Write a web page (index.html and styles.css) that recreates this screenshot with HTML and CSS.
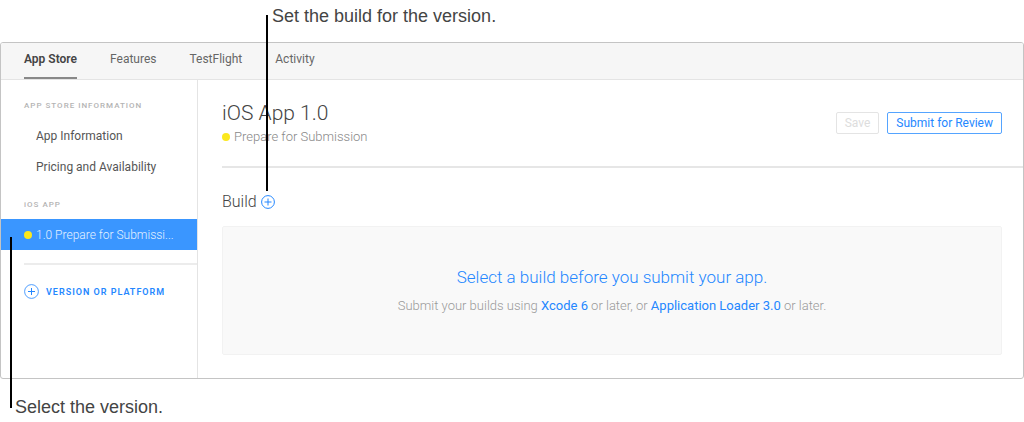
FILE: index.html
```html
<!DOCTYPE html>
<html lang="en">
<head>
    <meta charset="UTF-8">
    <meta name="viewport" content="width=device-width, initial-scale=1.0">
    <title>iOS App 1.0</title>
    <link rel="stylesheet" href="styles.css">
</head>
<body>
    <div class="figure">
        <p class="caption caption-top">Set the build for the version.</p>

        <div class="window">
            <nav class="tabs">
                <a href="#" class="tab active">App Store</a>
                <a href="#" class="tab">Features</a>
                <a href="#" class="tab">TestFlight</a>
                <a href="#" class="tab">Activity</a>
            </nav>

            <div class="columns">
                <aside class="sidebar">
                    <h3 class="group">APP STORE INFORMATION</h3>
                    <a href="#" class="item">App Information</a>
                    <a href="#" class="item">Pricing and Availability</a>
                    <h3 class="group">iOS APP</h3>
                    <a href="#" class="item selected"><span class="dot"></span>1.0 Prepare for Submissi...</a>
                    <div class="add-row">
                        <button class="add-version">
                            <svg width="15" height="15" viewBox="0 0 15 15" fill="none" stroke="currentColor">
                                <circle cx="7.5" cy="7.5" r="6.9" stroke-opacity="0.8"/>
                                <path d="M7.5 4v7M4 7.5h7"/>
                            </svg>
                            VERSION OR PLATFORM
                        </button>
                    </div>
                </aside>

                <main class="content">
                    <header class="app-header">
                        <div>
                            <h1>iOS App 1.0</h1>
                            <p class="status"><span class="dot"></span>Prepare for Submission</p>
                        </div>
                        <div class="actions">
                            <button class="button" disabled>Save</button>
                            <button class="button">Submit for Review</button>
                        </div>
                    </header>

                    <section class="build">
                        <div class="build-title">
                            <h2>Build</h2>
                            <button class="add-build" aria-label="Add build">
                                <svg width="14" height="14" viewBox="0 0 14 14" fill="none" stroke="currentColor">
                                    <circle cx="7" cy="7" r="6.4"/>
                                    <path d="M7 3.5v7M3.5 7h7"/>
                                </svg>
                            </button>
                        </div>
                        <div class="empty">
                            <a href="#" class="select-build">Select a build before you submit your app.</a>
                            <p>Submit your builds using <a href="#">Xcode 6</a> or later, or <a href="#">Application Loader 3.0</a> or later.</p>
                        </div>
                    </section>
                </main>
            </div>
        </div>

        <p class="caption caption-bottom">Select the version.</p>

        <span class="pointer pointer-build"></span>
        <span class="pointer pointer-version"></span>
    </div>
</body>
</html>
```
FILE: styles.css
```css
* {
    box-sizing: border-box;
}
body {
    margin: 0;
    background: white;
    color: #444;
    font-family: Roboto, "Liberation Sans", sans-serif;
    font-size: 12px;
    line-height: 16px;
}
h1, h2, h3, p {
    margin: 0;
    font-weight: 300;
}
a {
    color: #2487ff;
    text-decoration: none;
}
button {
    font-family: inherit;
    color: #2487ff;
    background: none;
    border: none;
    padding: 0;
    cursor: pointer;
}
svg {
    display: block;
}
.figure {
    position: relative;
}
.caption {
    font-family: "Liberation Sans", Arial, sans-serif;
    font-size: 18px;
    font-weight: 400;
    line-height: 20px;
    color: #444;
}
.caption-top {
    padding: 6px 0 16px 272px;
}
.caption-bottom {
    padding: 18px 0 0 15px;
}

/* callout lines */
.pointer {
    position: absolute;
    width: 2px;
    background: black;
}
.pointer-build {
    left: 266px;
    top: 15px;
    height: 176px;
}
.pointer-version {
    left: 10px;
    top: 237px;
    height: 171px;
}

.window {
    border: 1px solid #c4c4c4;
    border-radius: 3px;
    overflow: hidden;
}
.tabs {
    display: flex;
    gap: 33px;
    padding-left: 23px;
    background: #f6f6f6;
    border-bottom: 1px solid #e4e4e4;
}
.tab {
    padding: 8px 0 10px;
    color: #666;
    border-bottom: 2px solid transparent;
}
.tab.active {
    color: #444;
    font-weight: 600;
    border-bottom-color: #888;
}
.columns {
    display: flex;
}
.sidebar {
    flex: 0 0 197px;
    border-right: 1px solid #e4e4e4;
}
.group {
    padding: 18px 0 6px 23px;
    font-size: 8px;
    line-height: 16px;
    font-weight: 500;
    letter-spacing: 1px;
    color: #b4b4b4;
}
.item {
    display: flex;
    align-items: center;
    height: 31px;
    padding-left: 35px;
    color: #555;
}
.item + .group {
    padding-top: 15px;
}
.item.selected {
    gap: 4px;
    padding-left: 23px;
    background: #3a96ff;
    color: #e4f1ff;
    font-weight: 300;
}
.dot {
    flex: none;
    width: 8px;
    height: 8px;
    border-radius: 50%;
    background: #fbe81e;
}
.add-row {
    margin: 13px 0 0 23px;
    padding-top: 19px;
    border-top: 2px solid #ececec;
}
.add-version {
    display: flex;
    align-items: center;
    gap: 7px;
    font-size: 9px;
    font-weight: 600;
    letter-spacing: 1px;
}
.content {
    flex: 1;
    padding-left: 24px;
}
.app-header {
    display: flex;
    justify-content: space-between;
    align-items: center;
    padding: 19px 21px 20px 0;
    border-bottom: 2px solid #e6e6e6;
}
h1 {
    font-size: 21px;
    line-height: 28px;
}
.status {
    display: flex;
    align-items: center;
    gap: 4px;
    font-size: 13px;
    line-height: 19px;
    color: #888;
}
.actions {
    display: flex;
    gap: 8px;
}
.button {
    height: 22px;
    padding: 0 8px;
    border: 1px solid #55a4ff;
    border-radius: 2px;
    font-size: 12px;
}
.button:disabled {
    color: #ddd;
    border-color: #e4e4e4;
    cursor: default;
}
.build {
    padding: 24px 21px 23px 0;
}
.build-title {
    display: flex;
    align-items: center;
    gap: 4px;
}
h2 {
    font-size: 16px;
    line-height: 20px;
}
.empty {
    margin-top: 14px;
    padding: 38px 0 40px;
    text-align: center;
    font-size: 13px;
    font-weight: 300;
    color: #999;
    background: #f9f9f9;
    border: 1px solid #f2f2f2;
    border-radius: 2px;
}
.empty p {
    margin-top: 9px;
}
.empty p a {
    font-weight: 400;
}
.select-build {
    font-size: 17px;
    line-height: 24px;
}
```
